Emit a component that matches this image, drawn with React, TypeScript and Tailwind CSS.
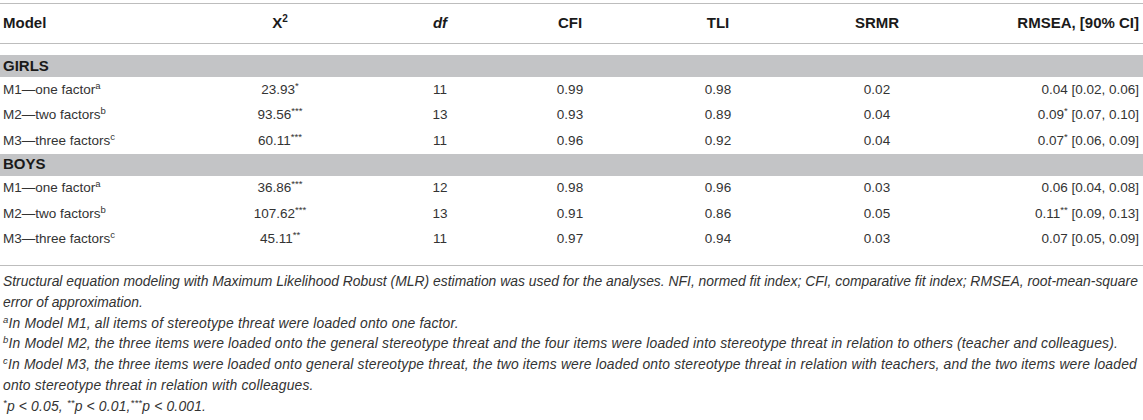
import React from "react"

interface FitRow {
  model: string
  note: string
  chi: string
  chiStars: string
  df: string
  cfi: string
  tli: string
  srmr: string
  rmsea: string
  rmseaStars: string
  ci: string
}

const groups: { label: string; rows: FitRow[] }[] = [
  {
    label: "GIRLS",
    rows: [
      { model: "M1—one factor", note: "a", chi: "23.93", chiStars: "*", df: "11", cfi: "0.99", tli: "0.98", srmr: "0.02", rmsea: "0.04", rmseaStars: "", ci: "[0.02, 0.06]" },
      { model: "M2—two factors", note: "b", chi: "93.56", chiStars: "***", df: "13", cfi: "0.93", tli: "0.89", srmr: "0.04", rmsea: "0.09", rmseaStars: "*", ci: "[0.07, 0.10]" },
      { model: "M3—three factors", note: "c", chi: "60.11", chiStars: "***", df: "11", cfi: "0.96", tli: "0.92", srmr: "0.04", rmsea: "0.07", rmseaStars: "*", ci: "[0.06, 0.09]" },
    ],
  },
  {
    label: "BOYS",
    rows: [
      { model: "M1—one factor", note: "a", chi: "36.86", chiStars: "***", df: "12", cfi: "0.98", tli: "0.96", srmr: "0.03", rmsea: "0.06", rmseaStars: "", ci: "[0.04, 0.08]" },
      { model: "M2—two factors", note: "b", chi: "107.62", chiStars: "***", df: "13", cfi: "0.91", tli: "0.86", srmr: "0.05", rmsea: "0.11", rmseaStars: "**", ci: "[0.09, 0.13]" },
      { model: "M3—three factors", note: "c", chi: "45.11", chiStars: "**", df: "11", cfi: "0.97", tli: "0.94", srmr: "0.03", rmsea: "0.07", rmseaStars: "", ci: "[0.05, 0.09]" },
    ],
  },
]

const cols = "grid grid-cols-[205px_150px_170px_90px_206px_112px_1fr] items-center"

function Sup({ children }: { children: React.ReactNode }) {
  return <sup className="text-[9.5px] relative -top-[5px]">{children}</sup>
}

export default function App() {
  return (
    <div className="w-[1143px] h-[420px] bg-white pt-[3px] text-[#333] font-['Liberation_Sans',Arial,sans-serif]">
      {/* Header */}
      <div className={`${cols} h-[41px] border-t border-b border-[#bdbdbd] text-[15px] font-bold text-[#1a1a1a]`}>
        <div className="pl-[3px]">Model</div>
        <div className="text-center">
          X<sup className="text-[10px] relative -top-[6px]">2</sup>
        </div>
        <div className="text-center italic">df</div>
        <div className="text-center">CFI</div>
        <div className="text-center">TLI</div>
        <div className="text-center">SRMR</div>
        <div className="text-right pr-[4px]">RMSEA, [90% CI]</div>
      </div>

      {/* Body */}
      <div className="pt-[11px] pb-[13px] border-b border-[#bdbdbd] text-[13.5px]">
        {groups.map((group) => (
          <div key={group.label}>
            <div className="h-[22px] bg-[#c3c4c6] flex items-center pl-[3px] text-[15px] font-bold text-[#1a1a1a]">
              {group.label}
            </div>
            {group.rows.map((row, i) => (
              <div key={i} className={`${cols} h-[25.5px]`}>
                <div className="pl-[3px]">
                  {row.model}
                  <Sup>{row.note}</Sup>
                </div>
                <div className="text-center">
                  {row.chi}
                  <Sup>{row.chiStars}</Sup>
                </div>
                <div className="text-center">{row.df}</div>
                <div className="text-center">{row.cfi}</div>
                <div className="text-center">{row.tli}</div>
                <div className="text-center">{row.srmr}</div>
                <div className="text-right pr-[4px]">
                  {row.rmsea}
                  {row.rmseaStars && <Sup>{row.rmseaStars}</Sup>} {row.ci}
                </div>
              </div>
            ))}
          </div>
        ))}
      </div>

      {/* Footnotes - line breaks follow the printed table */}
      <div className="pt-[5px] pl-[3px] italic text-[13.9px] tracking-[0.17px] leading-[20.8px] text-[#333] whitespace-nowrap">
        <div className="tracking-normal">
          Structural equation modeling with Maximum Likelihood Robust (MLR) estimation was used for the analyses. NFI,
          normed fit index; CFI, comparative fit index; RMSEA, root-mean-square
          <br />
          error of approximation.
        </div>
        <div>
          <Sup>a</Sup>In Model M1, all items of stereotype threat were loaded onto one factor.
        </div>
        <div>
          <Sup>b</Sup>In Model M2, the three items were loaded onto the general stereotype threat and the four items were
          loaded into stereotype threat in relation to others (teacher and colleagues).
        </div>
        <div>
          <Sup>c</Sup>In Model M3, the three items were loaded onto general stereotype threat, the two items were loaded
          onto stereotype threat in relation with teachers, and the two items were loaded
          <br />
          onto stereotype threat in relation with colleagues.
        </div>
        <div>
          <Sup>*</Sup>p &lt; 0.05, <Sup>**</Sup>p &lt; 0.01,<Sup>***</Sup>p &lt; 0.001.
        </div>
      </div>
    </div>
  )
}
